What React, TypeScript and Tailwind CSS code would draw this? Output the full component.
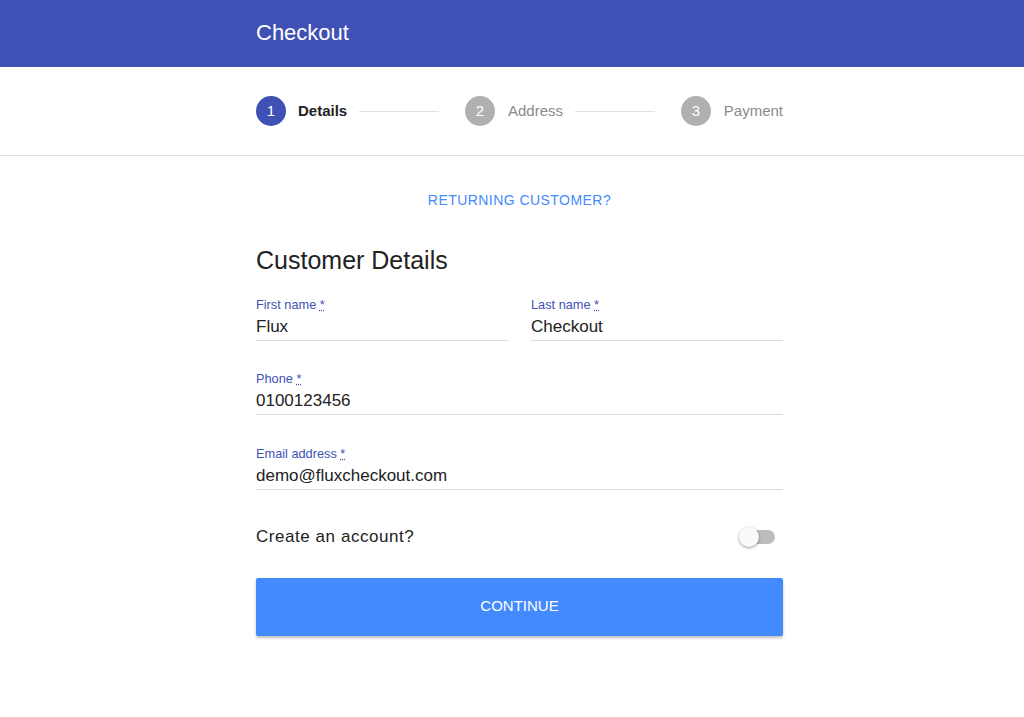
import React, { useState } from "react";

const steps = [
  { n: 1, label: "Details", active: true },
  { n: 2, label: "Address", active: false },
  { n: 3, label: "Payment", active: false },
];

const Field: React.FC<{ label: string; value: string }> = ({ label, value }) => (
  <div className="flex-1">
    <div className="text-[12.75px] leading-[14px] text-[#3f51b5]">
      {label} <span className="underline decoration-dotted">*</span>
    </div>
    <div className="mt-[4px] text-[17px] leading-[22px] text-[#222] pb-[2px] border-b border-[#dcdcdc]">
      {value}
    </div>
  </div>
);

const App: React.FC = () => {
  const [createAccount, setCreateAccount] = useState(false);

  return (
    <div className="min-h-screen bg-white font-['Liberation_Sans',Arial,sans-serif]">
      {/* Header */}
      <div className="h-[67px] bg-[#3f51b5] flex items-center pb-[3px]">
        <div className="w-[527px] ml-[256px] text-white text-[22px]">Checkout</div>
      </div>

      {/* Stepper */}
      <div className="h-[89px] border-b border-[#e2e2e2] flex items-center">
        <div className="w-[527px] ml-[256px] flex items-center">
          {steps.map((s, i) => (
            <React.Fragment key={s.n}>
              <div className="flex items-center">
                <div
                  className={
                    s.active
                      ? "w-[30px] h-[30px] rounded-full bg-[#3f51b5] text-white text-[15px] flex items-center justify-center"
                      : "w-[30px] h-[30px] rounded-full bg-[#b0b0b0] text-white text-[15px] flex items-center justify-center"
                  }
                >
                  {s.n}
                </div>
                <span
                  className={
                    s.active
                      ? "ml-[12px] text-[15px] font-bold text-[#222]"
                      : "ml-[13px] text-[15px] text-[#8a8a8a]"
                  }
                >
                  {s.label}
                </span>
              </div>
              {i < steps.length - 1 && (
                <div className="flex-1 h-px bg-[#e0e0e0] ml-[12px] mr-[26px]" />
              )}
            </React.Fragment>
          ))}
        </div>
      </div>

      <div className="w-[527px] ml-[256px]">
        {/* Returning customer */}
        <div className="pt-[32px] text-center">
          <a className="text-[14px] text-[#448aff] tracking-[0.45px] cursor-pointer">
            RETURNING CUSTOMER?
          </a>
        </div>

        <h2 className="mt-[33px] text-[25px] leading-[30px] text-[#222]">Customer Details</h2>

        <div className="mt-[23px] flex gap-[23px]">
          <Field label="First name" value="Flux" />
          <Field label="Last name" value="Checkout" />
        </div>
        <div className="mt-[31px]">
          <Field label="Phone" value="0100123456" />
        </div>
        <div className="mt-[32px]">
          <Field label="Email address" value="demo@fluxcheckout.com" />
        </div>

        {/* Create account */}
        <div className="mt-[34px] flex items-center justify-between pr-[6px]">
          <span className="text-[17px] tracking-[0.55px] text-[#222]">Create an account?</span>
          <button
            onClick={() => setCreateAccount(!createAccount)}
            className="relative w-[38px] h-[20px] flex items-center"
          >
            <div
              className={
                createAccount
                  ? "w-[34px] h-[14px] rounded-full bg-[#a6baf7] ml-[2px]"
                  : "w-[34px] h-[14px] rounded-full bg-[#bdbdbd] ml-[2px]"
              }
            />
            <div
              className={
                createAccount
                  ? "absolute right-0 top-0 w-[20px] h-[20px] rounded-full bg-[#3f51b5] shadow-[0_1px_3px_rgba(0,0,0,0.4)]"
                  : "absolute left-0 top-0 w-[20px] h-[20px] rounded-full bg-[#fafafa] shadow-[0_1px_3px_rgba(0,0,0,0.4)]"
              }
            />
          </button>
        </div>

        <button className="mt-[28px] w-full h-[58px] rounded-[2px] bg-[#448aff] text-white text-[15px] shadow-[0_2px_3px_rgba(0,0,0,0.25)]">
          CONTINUE
        </button>
      </div>
    </div>
  );
};

export default App;
